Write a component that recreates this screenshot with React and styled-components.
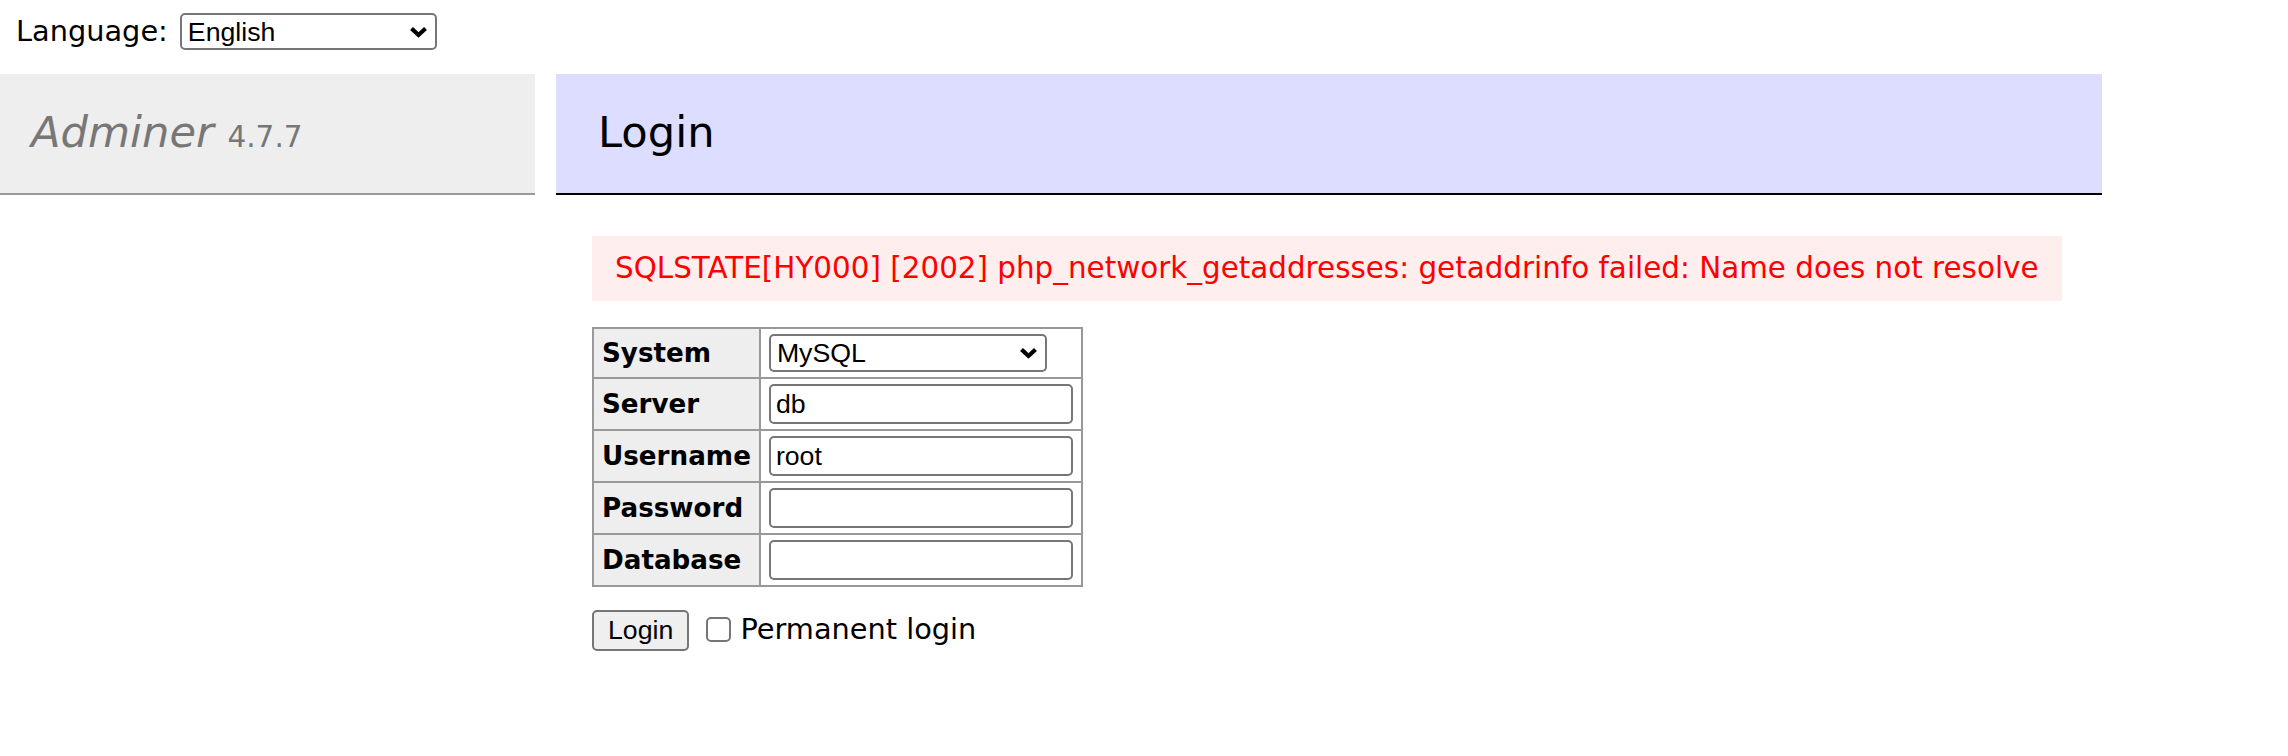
import React from "react";
import styled, { createGlobalStyle } from "styled-components";

const GlobalStyle = createGlobalStyle`
  body {
    margin: 0;
    background: #fff;
    color: #000;
    font: 28.8px/1.25 "DejaVu Sans", Verdana, sans-serif;
  }
`;

const LangBar = styled.form`
  display: flex;
  align-items: center;
  gap: 12px;
  height: 63px;
  margin: 0;
  padding: 0 16px;
`;

const SelectWrap = styled.span`
  position: relative;
  display: inline-block;
  width: ${(p) => p.$w}px;
  height: ${(p) => p.$h}px;
  vertical-align: middle;

  svg {
    position: absolute;
    right: 9px;
    top: 50%;
    transform: translateY(-50%);
    pointer-events: none;
  }
`;

const Select = styled.select`
  appearance: none;
  box-sizing: border-box;
  width: 100%;
  height: 100%;
  margin: 0;
  padding: 0 6px;
  border: 2px solid #767676;
  border-radius: 5px;
  background: #fff;
  color: #000;
  font: 26.7px "Liberation Sans", Arial, sans-serif;
`;

const Main = styled.div`
  display: flex;
  align-items: flex-start;
  padding-top: 11px;
`;

const Menu = styled.div`
  flex: none;
  width: 535px;
`;

const Brand = styled.h1`
  margin: 0;
  padding: 32px 28px 34px 31px;
  font-size: 43.2px;
  line-height: 53px;
  font-weight: normal;
  color: #777;
  background: #eee;
  border-bottom: 2px solid #999;

  em {
    font-style: italic;
  }
`;

const Version = styled.span`
  font-size: 29.5px;
  line-height: 1;
  color: #777;
`;

const Content = styled.div`
  flex: none;
  padding-left: 57px;
`;

const Title = styled.h2`
  margin: 0 0 41px -36px;
  padding: 32px 42px 34px;
  font-size: 43.2px;
  line-height: 53px;
  font-weight: normal;
  background: #ddf;
  border-bottom: 2px solid #000;
`;

const ErrorBox = styled.div`
  margin: 0 40px 0 0;
  padding: 15px 23px;
  font-size: 29.4px;
  line-height: 35px;
  color: red;
  background: #fee;
`;

const Table = styled.table`
  margin-top: 26px;
  border-collapse: separate;
  border-spacing: 0;
  border-top: 2px solid #999;
  border-left: 2px solid #999;
  font-size: 26.2px;
  line-height: 1.25;
`;

const Th = styled.th`
  padding: 5px 8px;
  text-align: left;
  font-weight: bold;
  background: #eee;
  border-right: 2px solid #999;
  border-bottom: 2px solid #999;
`;

const Td = styled.td`
  padding: 5px 8px;
  border-right: 2px solid #999;
  border-bottom: 2px solid #999;
`;

const Input = styled.input`
  box-sizing: border-box;
  display: block;
  width: 304px;
  height: 40px;
  margin: 0;
  padding: 2px 5px;
  border: 2px solid #767676;
  border-radius: 5px;
  background: #fff;
  color: #000;
  font: 26.7px "Liberation Sans", Arial, sans-serif;
`;

const Actions = styled.p`
  margin: 23px 0 0;
`;

const Button = styled.button`
  box-sizing: border-box;
  height: 41px;
  margin: 0;
  padding: 2px 14px;
  border: 2px solid #767676;
  border-radius: 5px;
  background: #efefef;
  color: #000;
  font: 26.7px "Liberation Sans", Arial, sans-serif;
  vertical-align: baseline;
`;

const Check = styled.input`
  appearance: none;
  box-sizing: border-box;
  width: 25px;
  height: 25px;
  margin: 0 9px 0 8px;
  border: 2px solid #767676;
  border-radius: 5px;
  background: #fff;
  vertical-align: -3px;
`;

const Chevron = () => (
  <svg width="19" height="12" viewBox="0 0 19 12">
    <path d="M2.5 2.5 L9.5 9 L16.5 2.5" fill="none" stroke="#000" strokeWidth="4.2" />
  </svg>
);

const Dropdown = ({ w, h, value, options }) => (
  <SelectWrap $w={w} $h={h}>
    <Select defaultValue={value}>
      {options.map((o) => (
        <option key={o}>{o}</option>
      ))}
    </Select>
    <Chevron />
  </SelectWrap>
);

const fields = [
  { label: "Server", value: "db" },
  { label: "Username", value: "root" },
  { label: "Password", value: "", type: "password" },
  { label: "Database", value: "" },
];

const App = () => {
  return (
    <>
      <GlobalStyle />
      <LangBar>
        <span>Language:</span>
        <Dropdown w={257} h={37} value="English" options={["English", "Deutsch", "Français"]} />
      </LangBar>
      <Main>
        <Menu>
          <Brand>
            <em>Adminer</em> <Version>4.7.7</Version>
          </Brand>
        </Menu>
        <Content>
          <Title>Login</Title>
          <ErrorBox>
            SQLSTATE[HY000] [2002] php_network_getaddresses: getaddrinfo failed: Name does not resolve
          </ErrorBox>
          <Table>
            <tbody>
              <tr>
                <Th>System</Th>
                <Td>
                  <Dropdown w={278} h={38} value="MySQL" options={["MySQL", "SQLite 3", "PostgreSQL"]} />
                </Td>
              </tr>
              {fields.map((f) => (
                <tr key={f.label}>
                  <Th>{f.label}</Th>
                  <Td>
                    <Input type={f.type || "text"} defaultValue={f.value} />
                  </Td>
                </tr>
              ))}
            </tbody>
          </Table>
          <Actions>
            <Button type="button">Login</Button> <Check type="checkbox" />
            Permanent login
          </Actions>
        </Content>
      </Main>
    </>
  );
};

export default App;
